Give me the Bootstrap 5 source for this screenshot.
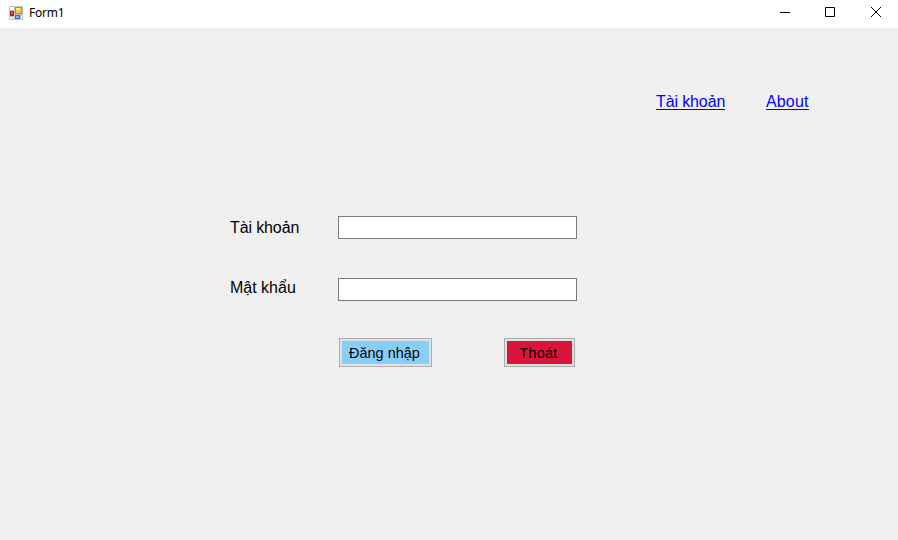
<!DOCTYPE html>
<html lang="vi">
<head>
<meta charset="utf-8">
<title>Form1</title>
<link href="https://cdn.jsdelivr.net/npm/bootstrap@5.3.0/dist/css/bootstrap.min.css" rel="stylesheet">
<style>
body{background:#f0f0f0;font-family:"Liberation Sans",Arial,sans-serif;font-size:16px;line-height:20px;color:#000}
.titlebar{height:28px;padding-left:9px;font:12px/16px "Noto Sans","Open Sans",sans-serif}
.titlebar .appicon{margin-bottom:3px}
.titlebar .caption{margin-left:6px;padding-bottom:2px;letter-spacing:-.25px}
.winbtn{width:46px;height:28px;padding:5px 0 0 18px;line-height:0}
.winbtn.minimize{padding-left:19px}
.toplinks{padding:64px 89px 0 0;gap:41px}
.toplinks a{color:#00f;text-decoration:none;border-bottom:1px solid #00f;height:18px;line-height:20px}
.toplinks .link-account{width:69px;letter-spacing:-.12px;white-space:nowrap}
.toplinks .link-about{width:43px;letter-spacing:.15px}
.login{margin:106px 0 0 230px;width:347px}
.login .line{height:23px;margin-bottom:39px}
.login .lbl{width:108px;letter-spacing:-.12px}
.login .lbl-pass{padding-bottom:4px;letter-spacing:0}
.login .form-control{height:23px;width:239px;border:1px solid #7a7a7a;background:#fff}
.actions{margin-top:-2px;padding:0 2px 0 109px}
.winform-btn{height:29px;border:1px solid #adadad;box-shadow:inset 0 0 0 2px #e1e1e1;font-size:14.4px;line-height:28px;color:#000}
.btn-login{width:93px;background:#87cefa;text-indent:-2px;letter-spacing:.05px}
.btn-exit{width:71px;background:#dc143c;text-indent:-2px;letter-spacing:.3px}
</style>
</head>
<body class="overflow-hidden">
<header class="titlebar d-flex align-items-center bg-white">
  <svg class="appicon" width="14" height="14" viewBox="0 0 14 14" shape-rendering="crispEdges">
    <path fill="#c5c5c5" d="M0 0h14v14H0z"/>
    <path fill="#fff" d="M1 1h4v3H1zM1 11h2v2H1zM4 11h1v2H4zM12 10h1v3h-1z"/>
    <path fill="#b5211c" d="M1 5h4v5H1z"/><path fill="#e65a4d" d="M2 6h2v2H2z"/>
    <path fill="#c58b12" d="M6 1h7v7H6z"/><path fill="#f7ca45" d="M7 2h5v5H7z"/><path fill="#ffe892" d="M7 2h4v2H7z"/>
    <path fill="#376fd0" d="M6 9h5v4H6z"/><path fill="#83aff4" d="M7 10h3v2H7z"/>
  </svg>
  <span class="caption">Form1</span>
  <div class="d-flex ms-auto">
    <div class="winbtn minimize"><svg width="13" height="13"><path d="M1 7.500h10" stroke="#000"/></svg></div>
    <div class="winbtn"><svg width="13" height="13"><path d="M1.500 2.500h9v9h-9z" fill="none" stroke="#000"/></svg></div>
    <div class="winbtn"><svg width="13" height="13"><path d="M1 2l10 10M11 2L1 12" stroke="#000"/></svg></div>
  </div>
</header>
<nav class="toplinks d-flex justify-content-end">
  <a href="#" class="link-account">Tài khoản</a>
  <a href="#" class="link-about">About</a>
</nav>
<form class="login">
  <div class="line d-flex align-items-center"><label class="lbl" for="user">Tài khoản</label><input id="user" type="text" class="form-control rounded-0 p-0"></div>
  <div class="line d-flex align-items-center"><label class="lbl lbl-pass" for="pass">Mật khẩu</label><input id="pass" type="password" class="form-control rounded-0 p-0"></div>
  <div class="actions d-flex justify-content-between">
    <button type="button" class="btn winform-btn btn-login rounded-0 p-0">Đăng nhập</button>
    <button type="button" class="btn winform-btn btn-exit rounded-0 p-0">Thoát</button>
  </div>
</form>
<script src="https://cdn.jsdelivr.net/npm/bootstrap@5.3.0/dist/js/bootstrap.bundle.min.js"></script>
</body>
</html>
